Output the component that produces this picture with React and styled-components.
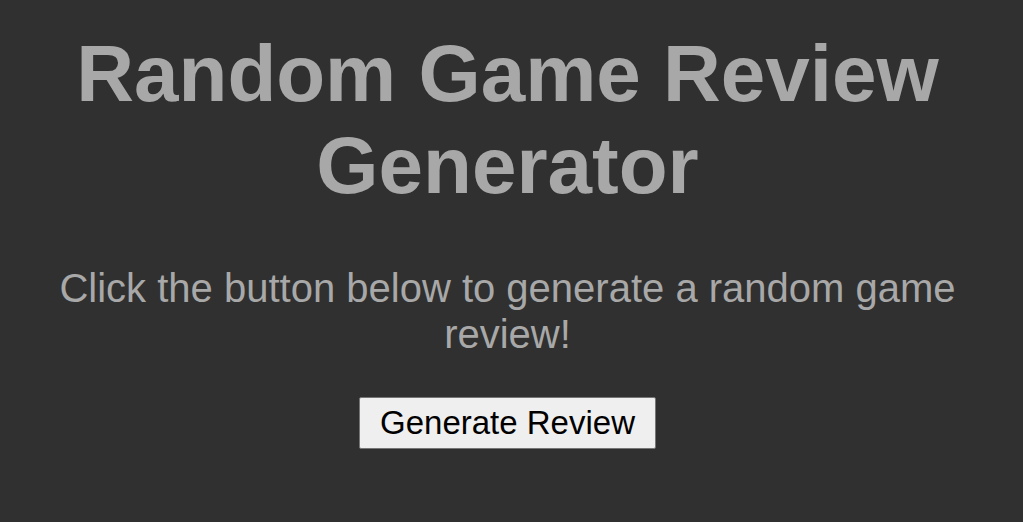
import React from "react";
import styled, { createGlobalStyle } from "styled-components";

const Global = createGlobalStyle`
  html, body { margin: 0; padding: 0; background: #303030; }
  body { font-family: "Liberation Sans", Arial, sans-serif; }
`;

const Page = styled.main`
  min-height: 522px;
  display: flex;
  flex-direction: column;
  align-items: center;
  text-align: center;
  padding: 28px 20px 0 12px;
  box-sizing: border-box;
`;

const Title = styled.h1`
  margin: 0;
  font-size: 80px;
  font-weight: 700;
  color: #a8a8a8;
  line-height: 92px;
  max-width: 900px;
`;

const Lead = styled.p`
  margin: 53px 0 0;
  font-size: 40px;
  color: #a8a8a8;
  line-height: 46px;
  max-width: 960px;
`;

const Button = styled.button`
  margin-top: 40px;
  font-family: "Liberation Sans", Arial, sans-serif;
  font-size: 33px;
  color: #000;
  background: #efefef;
  border: 1px solid #767676;
  border-radius: 2px;
  padding: 6px 20px;
  line-height: 38px;
  cursor: pointer;
`;

export default function App() {
  return (
    <>
      <Global />
      <Page>
        <Title>Random Game Review Generator</Title>
        <Lead>Click the button below to generate a random game review!</Lead>
        <Button>Generate Review</Button>
      </Page>
    </>
  );
}
